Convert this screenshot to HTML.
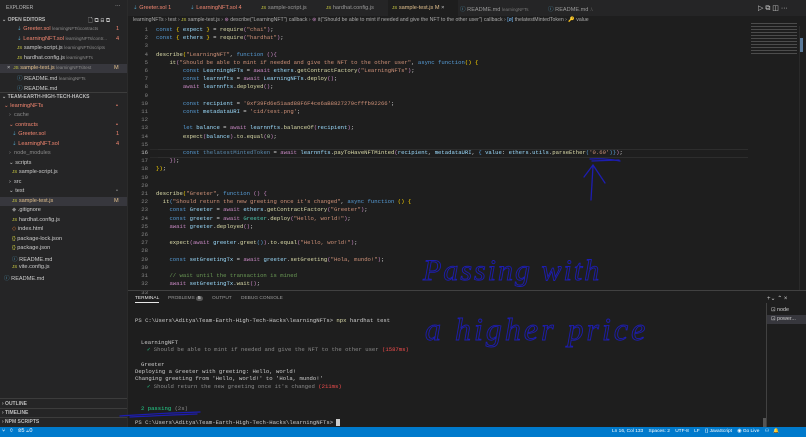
<!DOCTYPE html>
<html><head><meta charset="utf-8"><style>
*{margin:0;padding:0;box-sizing:border-box}
body{width:806px;height:437px;overflow:hidden;background:#1e1e1e;font-family:"Liberation Sans",sans-serif;position:relative;color:#ccc}
.a{position:absolute;white-space:pre}
.sb{position:absolute;left:0;top:0;width:128px;height:427px;background:#252526}
.si{position:absolute;font-size:5.6px;color:#ccc;white-space:pre}
.sh{font-weight:bold;font-size:5px;color:#bbb}
.r{color:#f48771}.dim{color:#8a8a8a}.yl{color:#cbcb41}
.code{font-family:"Liberation Mono",monospace;font-size:5.6px}
.ln{position:absolute;left:128px;width:20px;text-align:right;font-family:"Liberation Mono",monospace;font-size:5.6px;color:#858585}
.k{color:#569cd6}.v{color:#9cdcfe}.s{color:#ce9178}.f{color:#dcdcaa}.c{color:#c586c0}.y{color:#ffd700}.g{color:#6a9955}.n{color:#b5cea8}.cl{color:#4ec9b0}
.t{font-family:"Liberation Mono",monospace;font-size:5.6px;color:#ccc}
</style></head><body>
<!-- sidebar -->
<div class="sb"></div>
<div class="si" style="left:6px;top:5px;font-size:5px;color:#bbb">EXPLORER</div>
<div class="si" style="left:115px;top:3px;color:#ccc">···</div>
<div class="si sh" style="left:2px;top:17px">⌄ OPEN EDITORS</div>
<div class="si" style="left:88px;top:16px;color:#ccc;font-size:6px">🗋 ⧉ ⊟ ⧉</div>
<div class="si" style="left:17px;top:26px"><span style="color:#519aba">⇣</span> <span class="r">Greeter.sol</span> <span class="dim" style="font-size:4.5px">learningNFTs\contracts</span></div><div class="si r" style="left:116px;top:26px">1</div>
<div class="si" style="left:17px;top:36px"><span style="color:#519aba">⇣</span> <span class="r">LearningNFT.sol</span> <span class="dim" style="font-size:4.5px">learningNFTs\contr...</span></div><div class="si r" style="left:116px;top:36px">4</div>
<div class="si" style="left:17px;top:45px"><span class="yl" style="font-size:4.5px">JS</span> sample-script.js <span class="dim" style="font-size:4.5px">learningNFTs\scripts</span></div>
<div class="si" style="left:17px;top:55px"><span class="yl" style="font-size:4.5px">JS</span> hardhat.config.js <span class="dim" style="font-size:4.5px">learningNFTs</span></div>
<div class="a" style="left:0;top:64px;width:128px;height:9px;background:#37373d"></div>
<div class="si" style="left:7px;top:65px">×&nbsp; <span class="yl" style="font-size:4.5px">JS</span> <span style="color:#e2c08d">sample-test.js</span> <span class="dim" style="font-size:4.5px">learningNFTs\test</span></div><div class="si" style="left:114px;top:65px;color:#e2c08d">M</div>
<div class="si" style="left:17px;top:74px"><span style="color:#519aba">ⓘ</span> README.md <span class="dim" style="font-size:4.5px">learningNFTs</span></div>
<div class="si" style="left:17px;top:84px"><span style="color:#519aba">ⓘ</span> README.md</div>
<div class="a" style="left:0;top:92px;width:128px;height:1px;background:#3c3c3c"></div>
<div class="si sh" style="left:2px;top:94px">⌄ TEAM-EARTH-HIGH-TECH-HACKS</div>
<div class="si r" style="left:4px;top:103px">⌄ learningNFTs</div><div class="si r" style="left:116px;top:103px">•</div>
<div class="si dim" style="left:9px;top:112px">›&nbsp; cache</div>
<div class="si r" style="left:9px;top:122px">⌄ contracts</div><div class="si r" style="left:116px;top:122px">•</div>
<div class="si" style="left:12px;top:131px"><span style="color:#519aba">⇣</span> <span class="r">Greeter.sol</span></div><div class="si r" style="left:116px;top:131px">1</div>
<div class="si" style="left:12px;top:141px"><span style="color:#519aba">⇣</span> <span class="r">LearningNFT.sol</span></div><div class="si r" style="left:116px;top:141px">4</div>
<div class="si dim" style="left:9px;top:150px">›&nbsp; node_modules</div>
<div class="si" style="left:9px;top:160px">⌄ scripts</div>
<div class="si" style="left:12px;top:169px"><span class="yl" style="font-size:4.5px">JS</span> sample-script.js</div>
<div class="si" style="left:9px;top:179px">›&nbsp; src</div>
<div class="si" style="left:9px;top:188px">⌄ test</div><div class="si" style="left:116px;top:188px;color:#888">•</div>
<div class="a" style="left:0;top:197px;width:128px;height:9px;background:#37373d"></div>
<div class="si" style="left:12px;top:198px"><span class="yl" style="font-size:4.5px">JS</span> <span style="color:#e2c08d">sample-test.js</span></div><div class="si" style="left:114px;top:198px;color:#e2c08d">M</div>
<div class="si" style="left:12px;top:207px"><span class="dim">◆</span> .gitignore</div>
<div class="si" style="left:12px;top:217px"><span class="yl" style="font-size:4.5px">JS</span> hardhat.config.js</div>
<div class="si" style="left:12px;top:226px"><span style="color:#e37933">◇</span> index.html</div>
<div class="si" style="left:12px;top:236px"><span class="yl">{}</span> package-lock.json</div>
<div class="si" style="left:12px;top:245px"><span class="yl">{}</span> package.json</div>
<div class="si" style="left:12px;top:255px"><span style="color:#519aba">ⓘ</span> README.md</div>
<div class="si" style="left:12px;top:264px"><span class="yl" style="font-size:4.5px">JS</span> vite.config.js</div>
<div class="si" style="left:4px;top:274px"><span style="color:#519aba">ⓘ</span> README.md</div>
<div class="a" style="left:0;top:398px;width:128px;height:1px;background:#3c3c3c"></div>
<div class="si sh" style="left:2px;top:401px">› OUTLINE</div>
<div class="a" style="left:0;top:408px;width:128px;height:1px;background:#3c3c3c"></div>
<div class="si sh" style="left:2px;top:410px">› TIMELINE</div>
<div class="a" style="left:0;top:417px;width:128px;height:1px;background:#3c3c3c"></div>
<div class="si sh" style="left:2px;top:419px">› NPM SCRIPTS</div>
<div class="a" style="left:127px;top:0;width:1px;height:427px;background:#2b2b2b"></div>

<!-- tabs -->
<div class="a" style="left:128px;top:0;width:678px;height:16px;background:#252526"></div>
<div class="si" style="left:133px;top:5px"><span style="color:#519aba">⇣</span> <span class="r">Greeter.sol 1</span></div>
<div class="si" style="left:190px;top:5px"><span style="color:#519aba">⇣</span> <span class="r">LearningNFT.sol 4</span></div>
<div class="si" style="left:261px;top:5px;color:#999"><span class="yl" style="font-size:4.5px">JS</span> sample-script.js</div>
<div class="si" style="left:326px;top:5px;color:#999"><span class="yl" style="font-size:4.5px">JS</span> hardhat.config.js</div>
<div class="a" style="left:388px;top:0;width:70px;height:16px;background:#1e1e1e"></div>
<div class="si" style="left:392px;top:5px;color:#e2c08d"><span class="yl" style="font-size:4.5px">JS</span> sample-test.js M <span style="color:#ccc">×</span></div>
<div class="si" style="left:460px;top:5px;color:#999"><span style="color:#519aba">ⓘ</span> README.md <span style="font-size:4.5px;color:#777">learningNFTs</span></div>
<div class="si" style="left:548px;top:5px;color:#999"><span style="color:#519aba">ⓘ</span> README.md <span style="font-size:4.5px;color:#777">.\</span></div>
<div class="si" style="left:758px;top:4px;font-size:7px;color:#ccc">▷ ⧉ ◫ ···</div>
<!-- breadcrumb -->
<div class="si" style="left:133px;top:17px;color:#aaa;font-size:5.2px">learningNFTs › test › <span class="yl" style="font-size:4.5px">JS</span> sample-test.js › <span class="c">⊛</span> describe("LearningNFT") callback › <span class="c">⊛</span> it("Should be able to mint if needed and give the NFT to the other user") callback › <span style="color:#75beff">[ø]</span> thelatestMintedToken › 🔑 value</div>

<!-- code -->
<div id="code"></div>
<div class="ln" style="top:26px;line-height:8.2px">1<br>2<br>3<br>4<br>5<br>6<br>7<br>8<br>9<br>10<br>11<br>12<br>13<br>14<br>15<br><span style="color:#c6c6c6">16</span><br>17<br>18<br>19<br>20<br>21<br>22<br>23<br>24<br>25<br>26<br>27<br>28<br>29<br>30<br>31<br>32<br>33</div>
<div class="a" style="left:150px;top:149px;width:198px;height:9px;border-top:1px solid #282828;border-bottom:1px solid #282828"></div>
<div class="a" style="left:158px;top:149px;width:590px;height:9px;border-top:1px solid #2d2d2d;border-bottom:1px solid #2d2d2d"></div>
<div class="a code" style="left:156px;top:26px;line-height:8.2px;color:#d4d4d4"><span class="k">const</span> <span class="y">{</span> <span class="v">expect</span> <span class="y">}</span> = <span class="f">require</span><span class="c">(</span><span class="s">"chai"</span><span class="c">)</span>;
<span class="k">const</span> <span class="y">{</span> <span class="v">ethers</span> <span class="y">}</span> = <span class="f">require</span><span class="c">(</span><span class="s">"hardhat"</span><span class="c">)</span>;

<span class="f">describe</span><span class="y">(</span><span class="s">"LearningNFT"</span>, <span class="k">function</span> <span class="c">()</span><span class="c">{</span>
    <span class="f">it</span><span class="c">(</span><span class="s">"Should be able to mint if needed and give the NFT to the other user"</span>, <span class="k">async</span> <span class="k">function</span><span class="y">()</span> <span class="y">{</span>
        <span class="k">const</span> <span class="v">LearningNFTs</span> = <span class="c">await</span> <span class="v">ethers</span>.<span class="f">getContractFactory</span><span class="c">(</span><span class="s">"LearningNFTs"</span><span class="c">)</span>;
        <span class="k">const</span> <span class="v">learnnfts</span> = <span class="c">await</span> <span class="v">LearningNFTs</span>.<span class="f">deploy</span><span class="c">()</span>;
        <span class="c">await</span> <span class="v">learnnfts</span>.<span class="f">deployed</span><span class="c">()</span>;

        <span class="k">const</span> <span class="v">recipient</span> = <span class="s">'0xf39Fd6e51aad88F6F4ce6aB8827279cfffb92266'</span>;
        <span class="k">const</span> <span class="v">metadataURI</span> = <span class="s">'cid/test.png'</span>;

        <span class="k">let</span> <span class="v">balance</span> = <span class="c">await</span> <span class="v">learnnfts</span>.<span class="f">balanceOf</span><span class="c">(</span><span class="v">recipient</span><span class="c">)</span>;
        <span class="f">expect</span><span class="c">(</span><span class="v">balance</span><span class="c">)</span>.<span class="f">to</span>.<span class="f">equal</span><span class="c">(</span><span class="n">0</span><span class="c">)</span>;

        <span class="k">const</span> <span class="v" style="color:#5a8bb0">thelatestMintedToken</span> = <span class="c">await</span> <span class="v">learnnfts</span>.<span class="f">payToHaveNFTMinted</span><span class="c">(</span><span class="v">recipient</span>, <span class="v">metadataURI</span>, <span class="k">{</span> <span class="v">value</span>: <span class="v">ethers</span>.<span class="v">utils</span>.<span class="f">parseEther</span><span class="k">(</span><span class="s">'0.69'</span><span class="k">)</span><span class="k">}</span><span class="c">)</span>;
    <span class="c">})</span>;
<span class="y">})</span>;


<span class="f">describe</span><span class="y">(</span><span class="s">"Greeter"</span>, <span class="k">function</span> <span class="c">()</span> <span class="c">{</span>
  <span class="f">it</span><span class="k">(</span><span class="s">"Should return the new greeting once it's changed"</span>, <span class="k">async</span> <span class="k">function</span> <span class="y">()</span> <span class="y">{</span>
    <span class="k">const</span> <span class="v">Greeter</span> = <span class="c">await</span> <span class="v">ethers</span>.<span class="f">getContractFactory</span><span class="c">(</span><span class="s">"Greeter"</span><span class="c">)</span>;
    <span class="k">const</span> <span class="v">greeter</span> = <span class="c">await</span> <span class="cl">Greeter</span>.<span class="f">deploy</span><span class="c">(</span><span class="s">"Hello, world!"</span><span class="c">)</span>;
    <span class="c">await</span> <span class="v">greeter</span>.<span class="f">deployed</span><span class="c">()</span>;

    <span class="f">expect</span><span class="c">(</span><span class="c">await</span> <span class="v">greeter</span>.<span class="f">greet</span><span class="k">()</span><span class="c">)</span>.<span class="f">to</span>.<span class="f">equal</span><span class="c">(</span><span class="s">"Hello, world!"</span><span class="c">)</span>;

    <span class="k">const</span> <span class="v">setGreetingTx</span> = <span class="c">await</span> <span class="v">greeter</span>.<span class="f">setGreeting</span><span class="c">(</span><span class="s">"Hola, mundo!"</span><span class="c">)</span>;

    <span class="g">// wait until the transaction is mined</span>
    <span class="c">await</span> <span class="v">setGreetingTx</span>.<span class="f">wait</span><span class="c">()</span>;</div>
<!-- minimap -->
<div class="a" style="left:751px;top:22px;width:46px;height:34px;opacity:.5;background:repeating-linear-gradient(#1e1e1e 0 1px,#7a7a7a 1px 2px,#1e1e1e 2px 3px)"></div>
<div class="a" style="left:800px;top:38px;width:3px;height:14px;background:#5a7a9a"></div>
<div class="a" style="left:799px;top:26px;width:1px;height:265px;background:#2a2a2a"></div>

<!-- panel -->
<div class="a" style="left:128px;top:290px;width:678px;height:1px;background:#414141"></div>
<div class="si" style="left:135px;top:296px;font-size:4.8px;color:#e7e7e7;border-bottom:1px solid #e7e7e7;padding-bottom:1px">TERMINAL</div>
<div class="si" style="left:168px;top:296px;font-size:4.8px;color:#999">PROBLEMS <span style="background:#555;color:#fff;border-radius:4px;padding:0 2px">5</span></div>
<div class="si" style="left:212px;top:296px;font-size:4.8px;color:#999">OUTPUT</div>
<div class="si" style="left:241px;top:296px;font-size:4.8px;color:#999">DEBUG CONSOLE</div>
<div class="si" style="left:767px;top:295px;font-size:6px;color:#ccc">+⌄ ⌃ ×</div>
<div class="a" style="left:766px;top:303px;width:1px;height:124px;background:#414141"></div>
<div class="si" style="left:771px;top:307px;font-size:5.4px">⊡ node</div>
<div class="a" style="left:767px;top:315px;width:39px;height:9px;background:#37373d"></div>
<div class="si" style="left:771px;top:316px;font-size:5.4px">⊡ power...</div>
<div class="a" style="left:763px;top:418px;width:3px;height:9px;background:#555"></div>
<div class="a t" style="left:135px;top:317px">PS C:\Users\Aditya\Team-Earth-High-Tech-Hacks\learningNFTs&gt; <span class="f">npx</span> hardhat test</div>
<div class="a t" style="left:141px;top:339px">LearningNFT</div>
<div class="a t" style="left:147px;top:346px"><span style="color:#23d18b">✓</span> <span style="color:#8a8a8a">Should be able to mint if needed and give the NFT to the other user</span> <span style="color:#f14c4c">(1587ms)</span></div>
<div class="a t" style="left:141px;top:361px">Greeter</div>
<div class="a t" style="left:135px;top:368px">Deploying a Greeter with greeting: Hello, world!</div>
<div class="a t" style="left:135px;top:375px">Changing greeting from 'Hello, world!' to 'Hola, mundo!'</div>
<div class="a t" style="left:147px;top:383px"><span style="color:#23d18b">✓</span> <span style="color:#8a8a8a">Should return the new greeting once it's changed</span> <span style="color:#f14c4c">(211ms)</span></div>
<div class="a t" style="left:141px;top:405px"><span style="color:#23d18b">2 passing</span> <span style="color:#8a8a8a">(2s)</span></div>
<div class="a t" style="left:135px;top:419px">PS C:\Users\Aditya\Team-Earth-High-Tech-Hacks\learningNFTs&gt; <span style="background:#ccc;color:#ccc">_</span></div>

<!-- status bar -->
<div class="a" style="left:0;top:427px;width:806px;height:10px;background:#007acc"></div>
<div class="si" style="left:2px;top:428px;color:#fff;font-size:5.6px">⑂&nbsp;&nbsp; ⟳&nbsp;&nbsp; ⊗5 ⚠0</div>
<div class="si" style="left:612px;top:429px;color:#fff;font-size:4.8px">Ln 16, Col 133&nbsp;&nbsp;&nbsp; Spaces: 2&nbsp;&nbsp;&nbsp; UTF-8&nbsp;&nbsp;&nbsp; LF&nbsp;&nbsp;&nbsp; {} JavaScript&nbsp;&nbsp;&nbsp; ◉ Go Live&nbsp;&nbsp;&nbsp; ⚇&nbsp;&nbsp; 🔔</div>

<!-- pen annotations -->
<svg class="a" style="left:0;top:0" width="806" height="437" viewBox="0 0 806 437">
<g fill="none" stroke="#1d1db0" stroke-width="1.3" stroke-linecap="round">
<path d="M590 159 Q605 158 620 161"/>
<path d="M592 161 L619 160"/>
<path d="M591 200 L593 166 M584 177 L593 165 L605 183"/>
<path d="M120 416 Q160 413 200 412"/>
<path d="M130 417 Q170 415 197 414"/>
</g>
<g fill="none" stroke="#1d1db0" stroke-width="0.9" font-family="Liberation Serif" font-style="italic">
<text x="423" y="280" font-size="30" fill="none" letter-spacing="2">Passing with</text>
<text x="425" y="340" font-size="32" fill="none" letter-spacing="3">a higher price</text>
</g>
</svg>
</body></html>
